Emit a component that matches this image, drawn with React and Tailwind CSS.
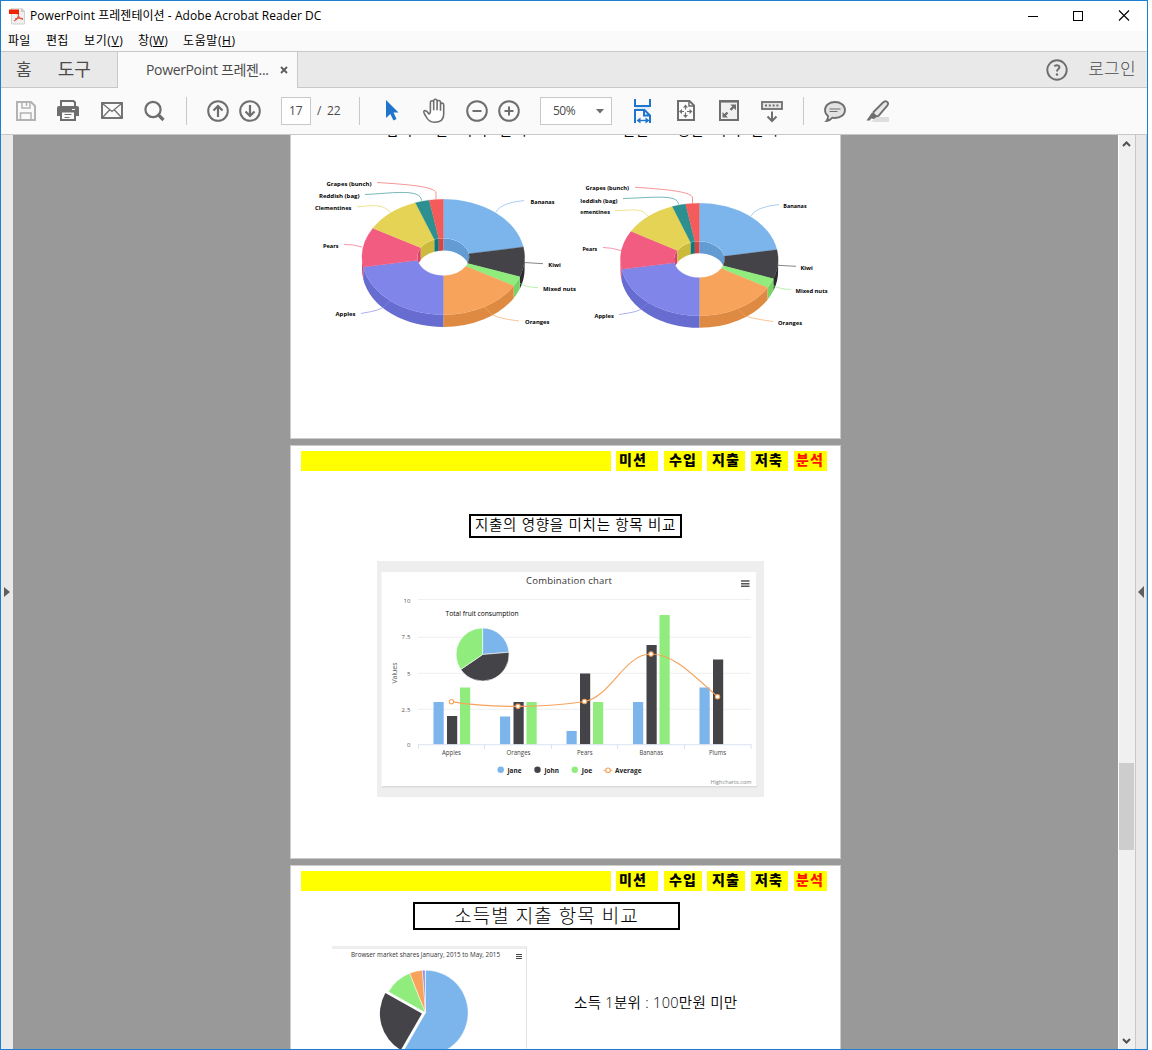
import React from "react";

const G = "#6e6e6e";

function PdfIcon() {
  return (
    <svg className="ml-2 h-[17px] w-[18px]" viewBox="9 7.5 18 17">
      <path d="M11.500 7.500h10l3 3v13h-13z" fill="#f0f0f0" stroke="#d2d2d2" />
      <path d="M21 7.500l4 4h-4z" fill="#c9c9c9" />
      <rect x="9" y="9" width="10" height="4.500" fill="#f02400" />
      <path d="M18.500 13.500c0 3-2 6-4.500 7M18 13.500c.5 3 2.500 5 5 5.500M15 18.500c2-.8 5-1.200 8-.3" fill="none" stroke="#e8543f" strokeWidth="1.200" />
    </svg>
  );
}

function TitleBar() {
  return (
    <div className="flex h-[30px] shrink-0 items-center bg-white">
      <PdfIcon />
      <span className="-mt-px ml-[3px] whitespace-pre text-[12px] tracking-[0.05px] text-black">PowerPoint 프레젠테이션 - Adobe Acrobat Reader DC</span>
      <svg className="mr-[17px] ml-auto h-[12px] w-[102px]" viewBox="1028 9.5 102 12" fill="none" stroke="#000" shapeRendering="crispEdges">
        <path d="M1028 15.500h10" />
        <rect x="1073.500" y="10.500" width="9" height="9" />
        <path d="M1119 10l10 10M1129 10l-10 10" shapeRendering="auto" strokeWidth="1.100" />
      </svg>
    </div>
  );
}

function MenuBar() {
  return (
    <div className="flex h-[20px] shrink-0 items-center bg-[#fafafa] text-[12px] leading-[20px] whitespace-nowrap text-black">
      <span className="ml-[7px] w-[38px] tracking-[0.3px]">파일</span>
      <span className="w-[38px] tracking-[0.3px]">편집</span>
      <span className="w-[54px] tracking-[0.6px]">보기(<u>V</u>)</span>
      <span className="w-[45px] tracking-[0.2px]">창(<u>W</u>)</span>
      <span className="tracking-[0.6px]">도움말(<u>H</u>)</span>
    </div>
  );
}

function TabBar() {
  return (
    <div className="flex h-[37px] shrink-0 border-t border-[#c8c8c8] bg-[#e9e9e9] text-[#4b4b4b]">
      <div className="flex w-[117px] items-center border-r border-b border-[#c8c8c8] text-[17px]">
        <span className="ml-[15px]">홈</span>
        <span className="ml-[26px] text-[18px]">도구</span>
      </div>
      <div className="flex w-[180px] items-center border-r border-[#c8c8c8] bg-[#fafafa]">
        <span className="-mt-[2px] ml-[28px] w-[134px] text-[14px] tracking-[-0.35px] whitespace-nowrap">PowerPoint 프레젠...</span>
        <svg className="h-[8px] w-[8px]" viewBox="0 0 8 8"><path d="M1 1l6 6M7 1l-6 6" stroke="#5c5c5c" strokeWidth="1.800" /></svg>
      </div>
      <div className="flex flex-1 items-center border-b border-[#c8c8c8]">
        <svg className="ml-auto h-[22px] w-[22px]" viewBox="0 0 22 22">
          <circle cx="11" cy="11" r="9.700" fill="none" stroke={G} strokeWidth="1.900" />
          <path d="M8.200 7.200q2.600-1.500 4.500-.4q1.600 1.400-.4 3.200q-1.300 1-1.300 2.500" fill="none" stroke={G} strokeWidth="2" />
          <circle cx="11" cy="15.500" r="1.200" fill={G} />
        </svg>
        <span className="mr-[11px] ml-[20px] -mt-px text-[17px] font-light tracking-[0.3px]">로그인</span>
      </div>
    </div>
  );
}

function Icon({ className, x, w, children }) {
  return (
    <svg className={`h-[28px] shrink-0 ${className}`} viewBox={`${x} 97 ${w} 28`} fill="none" stroke={G} strokeWidth="2">
      {children}
    </svg>
  );
}

function Sep({ className }) {
  return <div className={`h-[28px] w-px shrink-0 bg-[#c8c8c8] ${className}`} />;
}

function Toolbar() {
  return (
    <div className="flex h-[47px] shrink-0 items-center border-b border-[#c8c8c8] bg-[#fafafa] text-[#4b4b4b]">
      <Icon x={16} w={20} className="ml-[15px] w-[20px]">
        <path d="M17 102h14l4 4v14h-18z" stroke="#b3b3b3" />
        <path d="M22 102v6h8v-6" stroke="#b3b3b3" strokeWidth="1.500" />
        <path d="M26.500 103v3" stroke="#b3b3b3" strokeWidth="1.500" />
        <path d="M20.500 120v-7h10.500v7" stroke="#b3b3b3" strokeWidth="1.500" />
      </Icon>
      <Icon x={57} w={22} className="ml-[21px] w-[22px]">
        <path d="M61 106v-5h12.500l1.500 1.500v3.500" />
        <path d="M59 106h18q2 0 2 2v8h-4v-3.500h-14v3.500h-4v-8q0-2 2-2z" fill={G} stroke="none" />
        <path d="M61 112v8h14v-8" />
        <path d="M64.500 114.500h7M64.500 117.500h5" strokeWidth="1.200" />
        <path d="M72 109.500h3" stroke="#fafafa" strokeWidth="1" />
      </Icon>
      <Icon x={101} w={22} className="ml-[22px] w-[22px]">
        <rect x="102" y="103" width="20" height="15" strokeWidth="1.900" />
        <path d="M103 104l9 7.500 9-7.500M103 117l6.500-7M121 117l-6.500-7" strokeWidth="1.200" />
      </Icon>
      <Icon x={144} w={21} className="ml-[21px] w-[21px]">
        <circle cx="153" cy="109.500" r="7.600" strokeWidth="2.200" />
        <path d="M158 114.500l5.500 5.500" strokeWidth="3.200" />
      </Icon>
      <Sep className="ml-[21px]" />
      <Icon x={207} w={22} className="ml-[20px] w-[22px]">
        <circle cx="218" cy="111" r="9.800" />
        <path d="M218 117v-11M213.500 110.500l4.500-4.500 4.500 4.500" strokeWidth="2.200" />
      </Icon>
      <Icon x={239} w={22} className="ml-[10px] w-[22px]">
        <circle cx="250" cy="111" r="9.800" />
        <path d="M250 105v11M245.500 111.500l4.500 4.500 4.500-4.500" strokeWidth="2.200" />
      </Icon>
      <div className="ml-[20px] flex h-[28px] w-[30px] items-center border border-[#c8c8c8] bg-white pl-[7px] text-[12px] tracking-[-0.2px]">17</div>
      <span className="ml-[6px] w-[42px] text-[12px] tracking-[-0.2px] whitespace-pre">/  22</span>
      <Sep />
      <Icon x={385} w={14} className="ml-[25px] w-[14px]">
        <path d="M386 100l12.500 12.500h-5l3 6.500-3 1.500-3.200-6.500-4.300 4z" fill="#1f75cc" stroke="none" />
      </Icon>
      <Icon x={422} w={24} className="ml-[23px] w-[24px]">
        <path d="M428.500 113.500c-1.500-2.500-3.500-3.500-4.500-2.500s.5 3 2 5.500c2 4 4 5.800 8.500 5.800c6 0 9.200-3 9.200-8v-9.500c0-2.300-3.200-2.300-3.200 0v6v-8.500c0-2.400-3.400-2.400-3.400 0v8v-9.300c0-2.400-3.400-2.400-3.400 0v9.300v-7.800c0-2.400-3.300-2.400-3.300 0v9c0 1.600-1.200 3-1.900 2z" strokeWidth="1.600" fill="#fff" />
      </Icon>
      <Icon x={466} w={22} className="ml-[20px] w-[22px]">
        <circle cx="477" cy="111" r="9.800" /><path d="M472.500 111h9" />
      </Icon>
      <Icon x={498} w={22} className="ml-[10px] w-[22px]">
        <circle cx="509" cy="111" r="9.800" /><path d="M504.500 111h9M509 106.500v9" />
      </Icon>
      <div className="ml-[20px] flex h-[28px] w-[72px] items-center border border-[#c8c8c8] bg-white text-[12px]">
        <span className="ml-[12px] w-[43px] tracking-[-0.5px]">50%</span>
        <svg className="h-[5px] w-[8px]" viewBox="0 0 8 5"><path d="M0 0h8l-4 4.500z" fill={G} /></svg>
      </div>
      <Icon x={633} w={19} className="ml-[21px] w-[19px]">
        <path d="M635 107h15v2.500h-15z" fill="#dce9f7" stroke="none" />
        <path d="M635 99v7h15v-7M635 123v-13h9.500l5.500 5.500v7.500M644 110v5.500h6" stroke="#1f75cc" />
        <path d="M638 120.500h10" stroke="#1f75cc" strokeWidth="1.400" />
        <path d="M640.500 117.500l-4 3 4 3zM645.500 117.500l4 3-4 3z" fill="#1f75cc" stroke="none" />
      </Icon>
      <Icon x={676} w={20} className="ml-[24px] w-[20px]">
        <path d="M678 101h11.500l4.500 4.500v14.500h-16z" />
        <path d="M689 101v5h5" strokeWidth="1.500" />
        <path d="M685.500 106v10M680.500 111.500h10.500" strokeWidth="1.200" strokeDasharray="3.500 3" />
        <path d="M683 107.500l2.500-3 2.500 3zM683 115l2.500 3 2.500-3zM682 109l-3 2.500 3 2.500zM689.500 109l3 2.500-3 2.500z" fill={G} stroke="none" />
      </Icon>
      <Icon x={719} w={20} className="ml-[23px] w-[20px]">
        <rect x="720" y="101" width="18" height="19" fill="#f0f0f0" />
        <path d="M720 101.300h18" strokeWidth="2.600" />
        <path d="M730.500 109.800l3-3M724.500 115.500l3-3" strokeWidth="2.400" />
        <path d="M730.300 104.500h5.700v5.700zM722.500 112v5.500h5.500z" fill={G} stroke="none" />
      </Icon>
      <Icon x={761} w={22} className="ml-[22px] w-[22px]">
        <rect x="762" y="102" width="20" height="7" fill="#e6e6e6" strokeWidth="1.800" />
        <path d="M765 105.500h14" strokeDasharray="2 1.800" />
        <path d="M772 111.500v9.500M767.500 116.500l4.500 4.500 4.500-4.500" />
      </Icon>
      <Sep className="ml-[20px]" />
      <Icon x={824} w={22} className="ml-[20px] w-[22px]">
        <path d="M835 102c5.500 0 10 3.200 10 8s-4.500 8-10 8q-1.500 0-2.500-.3-2.500 3-6 3.300 1.800-2 1.500-5c-2-1.500-3-3.500-3-6 0-4.800 4.500-8 10-8z" fill="#e2e2e2" strokeWidth="1.800" />
        <path d="M829.500 109h11M829.500 111.500h8" strokeWidth="1.200" />
      </Icon>
      <Icon x={866} w={24} className="ml-[20px] w-[24px]">
        <path d="M876 117h13v5h-18z" fill="#dedede" stroke="none" />
        <path d="M873.500 112l9.500-9.500q2-2 4-.8t.5 3.700l-9 10.500-2.500.3-2.500-2.200z" fill="#e6e6e6" strokeWidth="1.800" />
        <path d="M872 112.500l5 4-3 2.500-3-.5-1 2h-3.500z" fill={G} stroke="none" />
      </Icon>
    </div>
  );
}

const SLICES = [
  ["#7cb5ec", "#639cd3", 0, 80],
  ["#434348", "#2a2a2f", 80, 110],
  ["#90ed7d", "#77d464", 110, 120],
  ["#f7a35c", "#de8a43", 120, 180],
  ["#8085e9", "#676cd0", 180, 260],
  ["#f15c80", "#d84367", 260, 300],
  ["#e4d354", "#cbba3b", 300, 340],
  ["#2b908f", "#127776", 340, 350],
  ["#f45b5b", "#db4242", 350, 360],
];

function at(cx, cy, rx, ry, deg) {
  const a = (deg * Math.PI) / 180;
  return `${(cx + rx * Math.sin(a)).toFixed(2)} ${(cy - ry * Math.cos(a)).toFixed(2)}`;
}

function band(cx, cy, rx, ry, d, a, b) {
  return `M${at(cx, cy, rx, ry, a)}A${rx} ${ry} 0 0 1 ${at(cx, cy, rx, ry, b)}L${at(cx, cy + d, rx, ry, b)}A${rx} ${ry} 0 0 0 ${at(cx, cy + d, rx, ry, a)}Z`;
}

function ring(cx, cy, rx, ry, ix, iy, a, b) {
  return `M${at(cx, cy, rx, ry, a)}A${rx} ${ry} 0 0 1 ${at(cx, cy, rx, ry, b)}L${at(cx, cy, ix, iy, b)}A${ix} ${iy} 0 0 0 ${at(cx, cy, ix, iy, a)}Z`;
}

function wedge(cx, cy, r, a, b) {
  return `M${cx} ${cy}L${at(cx, cy, r, r, a)}A${r} ${r} 0 ${b - a > 180 ? 1 : 0} 1 ${at(cx, cy, r, r, b)}Z`;
}

function Donut({ id, cx, cy, rx, ry, ix, iy, d, labels, lines }) {
  return (
    <g>
      <clipPath id={id}><ellipse cx={cx} cy={cy} rx={ix} ry={iy} /></clipPath>
      {SLICES.filter((s) => s[3] > 90 && s[2] < 270).map(([, dark, a, b]) => (
        <path key={a} d={band(cx, cy, rx, ry, d, Math.max(a, 90), Math.min(b, 270))} fill={dark} />
      ))}
      <g clipPath={`url(#${id})`}>
        {SLICES.filter((s) => s[3] > 270 || s[2] < 90).map(([, dark, a, b]) => (
          <path key={a} d={band(cx, cy, ix, iy, d, a >= 260 ? Math.max(a, 270) : a, a < 90 ? Math.min(b, 90) : b)} fill={dark} />
        ))}
      </g>
      {SLICES.map(([c, , a, b]) => (
        <path key={a} d={ring(cx, cy, rx, ry, ix, iy, a, b)} fill={c} stroke={c} strokeWidth="0.300" />
      ))}
      {lines.map(([c, path]) => <path key={path} d={path} fill="none" stroke={c} strokeWidth="0.650" />)}
      {labels.map(([t, x, y, w]) => (
        <text key={t} x={x} y={y} textLength={w} lengthAdjust="spacingAndGlyphs" fontSize="6" fontWeight="700" fill="#000">{t}</text>
      ))}
    </g>
  );
}

function DonutCharts() {
  return (
    <svg className="ml-[19px] block h-[160px] w-[525px]" viewBox="310 175 525 160">
      <Donut id="holeLeft" cx={443.3} cy={257} rx={81.3} ry={57.7} ix={26} iy={18.7} d={12.300}
        labels={[
          ["Grapes (bunch)", 326.5, 185.700, 45], ["Reddish (bag)", 319, 198, 40.5], ["Clementines", 315, 210.300, 36.500],
          ["Pears", 323, 247.700, 15.500], ["Apples", 335.500, 316.300, 20], ["Bananas", 530.5, 204.300, 24],
          ["Kiwi", 548.300, 266.700, 12.500], ["Mixed nuts", 543, 291.300, 33], ["Oranges", 525, 324, 24.500],
        ]}
        lines={[
          ["#f45b5b", "M377 182.500C400 184 436 186 436 193V199"],
          ["#2b908f", "M365 194.500C390 193.500 421 188 421.500 200.500"],
          ["#e4d354", "M357 207C375 205 382 204 391 212.500"],
          ["#f15c80", "M344 244.500Q352 244 362 247"],
          ["#8085e9", "M361 313.500Q382 310 384 306.500Q388 302 391 301"],
          ["#7cb5ec", "M524 200.500Q500 203 496 212"],
          ["#434348", "M524.500 262.500L543 263.700"],
          ["#90ed7d", "M519.500 283Q524 287 538 287.700"],
          ["#f7a35c", "M519 321Q493 318 489 312Q487 308 484 307.500"],
        ]} />
      <clipPath id="rightHalf"><rect x="580.500" y="175" width="260" height="160" /></clipPath>
      <g clipPath="url(#rightHalf)">
        <Donut id="holeRight" cx={699.3} cy={259.500} rx={78.800} ry={56.300} ix={25.300} iy={18.200} d={12}
          labels={[
            ["Grapes (bunch)", 585.500, 190.300, 43.500], ["Reddish (bag)", 578.500, 202.500, 39], ["Clementines", 574.500, 214.300, 35.500],
            ["Pears", 582.500, 251.300, 14.700], ["Apples", 594.500, 317.700, 19.300], ["Bananas", 783.300, 208.300, 23.300],
            ["Kiwi", 800.500, 269.500, 12.300], ["Mixed nuts", 795.500, 293.300, 32], ["Oranges", 778, 325, 24],
          ]}
          lines={[
            ["#f45b5b", "M635 187.300C660 189 692.500 191 692.500 198V203.500"],
            ["#2b908f", "M623 198.500C655 197.500 678 194 678.500 204.500"],
            ["#e4d354", "M615 210.700C636 210 641 208 648 216"],
            ["#f15c80", "M603 247.500Q611 247.500 621 250.500"],
            ["#8085e9", "M619 314.500Q638 312 641 309Q645 304 649 303"],
            ["#7cb5ec", "M779 204.500Q755 207 751 216"],
            ["#434348", "M778 265.300L796 266.300"],
            ["#90ed7d", "M773 285.500Q779 289 791 289.500"],
            ["#f7a35c", "M773 321.500Q747 318 743 314.500Q741 311 738 309.500"],
          ]} />
      </g>
    </svg>
  );
}

const BARS = [
  [433.500, 702, "#7cb5ec"], [447, 716, "#434348"], [460, 687.500, "#90ed7d"],
  [500, 716.500, "#7cb5ec"], [513.500, 702, "#434348"], [526.500, 702, "#90ed7d"],
  [566.500, 731, "#7cb5ec"], [580, 673.500, "#434348"], [593, 702, "#90ed7d"],
  [633, 702, "#7cb5ec"], [646.500, 645, "#434348"], [659.500, 615, "#90ed7d"],
  [699.500, 687.500, "#7cb5ec"], [713, 659.500, "#434348"],
];
const POINTS = [[451.500, 701.700], [518, 706.300], [584.500, 701.500], [651, 654], [717.500, 696.700]];

function CombinationChart() {
  return (
    <svg className="mt-[23px] ml-[86px] block h-[236px] w-[387px]" viewBox="377 561 387 236">
      <rect x="377" y="561" width="387" height="236" fill="#eee" />
      <rect x="382" y="573" width="375" height="214.500" fill="#dcdcdc" />
      <rect x="381.500" y="572" width="375" height="214" fill="#fff" />
      <text x="526" y="584" textLength="86" fontSize="9.500" fill="#333">Combination chart</text>
      <path d="M741 581h8.500M741 583.700h8.500M741 586.200h8.500" stroke="#555" strokeWidth="1.500" />
      {[599.500, 637.300, 673.300, 709.300].map((y) => <path key={y} d={`M418 ${y}H751`} stroke="#efefef" />)}
      {[["10", 602.500, 403.500, 7], ["7.5", 639.300, 401.500, 9], ["5", 675.700, 407, 3.500], ["2.5", 711.500, 401.500, 9], ["0", 747, 407, 3.500]].map(([t, y, x, w]) => (
        <text key={t} x={x} y={y} textLength={w} fontSize="6" fill="#555">{t}</text>
      ))}
      <text transform="translate(397 683.500) rotate(-90)" textLength="21" fontSize="7" fill="#555">Values</text>
      {BARS.map(([x, y, c]) => <rect key={x} x={x} y={y} width="10.200" height={744.500 - y} fill={c} />)}
      <path d="M418 744.700H751.500M418.500 744v5M484.500 744v5M551.500 744v5M617.500 744v5M684.500 744v5M751 744v5" stroke="#dde3f3" fill="none" />
      {[["Apples", 442, 19], ["Oranges", 506.500, 24], ["Pears", 577, 15.500], ["Bananas", 639.500, 23.500], ["Plums", 709, 17]].map(([t, x, w]) => (
        <text key={t} x={x} y="755" textLength={w} lengthAdjust="spacingAndGlyphs" fontSize="6.200" fill="#444">{t}</text>
      ))}
      <path d="M451.500 701.700C464 704 491 706.500 518 706.300S566 704.500 584.500 701.500C611 697 624 654 651 654C672 654 689 671 717.500 696.700" fill="none" stroke="#f7a35c" strokeWidth="1.200" />
      {POINTS.map(([x, y]) => <circle key={x} cx={x} cy={y} r="2.200" fill="#fff" stroke="#f7a35c" strokeWidth="1.100" />)}
      <text x="445.500" y="616" textLength="73" lengthAdjust="spacingAndGlyphs" fontSize="6.200" fill="#000">Total fruit consumption</text>
      {[["#7cb5ec", 0, 85.100], ["#434348", 85.100, 235.600], ["#90ed7d", 235.600, 360]].map(([c, a, b]) => (
        <path key={c} d={wedge(482.600, 654.500, 26.500, a, b)} fill={c} stroke="#fff" strokeWidth="0.600" />
      ))}
      <circle cx="500.700" cy="769.800" r="3.200" fill="#7cb5ec" />
      <circle cx="537.500" cy="769.800" r="3.200" fill="#434348" />
      <circle cx="574.800" cy="769.800" r="3.200" fill="#90ed7d" />
      <path d="M603.500 770.300h9" stroke="#f7a35c" />
      <circle cx="608" cy="770.300" r="2.300" fill="#fff" stroke="#f7a35c" strokeWidth="1.200" />
      {[["Jane", 507.500, 14], ["John", 544.500, 14.500], ["Joe", 581.700, 10.500], ["Average", 615, 26.500]].map(([t, x, w]) => (
        <text key={t} x={x} y="772.500" textLength={w} lengthAdjust="spacingAndGlyphs" fontSize="6.300" fontWeight="700" fill="#222">{t}</text>
      ))}
      <text x="710.500" y="784" textLength="41" lengthAdjust="spacingAndGlyphs" fontSize="5.500" fill="#888">Highcharts.com</text>
    </svg>
  );
}

function MarketChart() {
  return (
    <svg className="block h-[120px] w-[195px] shrink-0" viewBox="332 946 195 120">
      <rect x="332" y="946" width="195" height="3" fill="#eee" />
      <rect x="526" y="946" width="1" height="120" fill="#e3e3e3" />
      <text x="351" y="957.300" textLength="149" fontSize="6.300" fill="#333">Browser market shares January, 2015 to May, 2015</text>
      <path d="M516 954.500h6M516 956.500h6M516 958.500h6" stroke="#444" strokeWidth="1.100" />
      {[["#7cb5ec", 0, 210], ["#90ed7d", 299.500, 338.200], ["#f7a35c", 338.200, 356], ["#8085e9", 356, 359.300]].map(([c, a, b]) => (
        <path key={c} d={wedge(425.500, 1012.800, 42.600, a, b)} fill={c} stroke="#fff" strokeWidth="0.500" />
      ))}
      <path d={wedge(421.900, 1013.600, 42, 210, 299.500)} fill="#434348" />
    </svg>
  );
}

function SlideNav() {
  return (
    <div className="mt-[5px] ml-[10px] flex h-[20px] text-[14px] leading-[18px] font-black tracking-[1.2px] whitespace-nowrap text-black">
      <div className="w-[310px] bg-[#ff0]" />
      <div className="ml-[5px] w-[42px] bg-[#ff0] pl-[3px]">미션</div>
      <div className="ml-[6px] w-[38px] bg-[#ff0] pl-[5px]">수입</div>
      <div className="ml-[5px] w-[38px] bg-[#ff0] pl-[5px]">지출</div>
      <div className="ml-[6px] w-[37px] bg-[#ff0] pl-[4px]">저축</div>
      <div className="ml-[6px] w-[33px] bg-[#ff0] pl-[2px] text-[#ff1200]">분석</div>
    </div>
  );
}

function Document() {
  return (
    <div className="flex flex-1 flex-col gap-[6px] overflow-hidden bg-[#999] pl-[277px]">
      <div className="h-[304px] w-[551px] shrink-0 border-x border-b border-[#ccc] bg-white">
        <div className="flex h-[40px] items-start overflow-hidden text-[14px] leading-[14px] tracking-[1.2px] text-black">
          <div className="-mt-[12px] ml-[95px] w-[236px] [word-spacing:6.5px] whitespace-nowrap">남자 1인 가치 분석</div>
          <div className="-mt-[12px] [word-spacing:4px] whitespace-nowrap">신혼 1 영은 가치 분석</div>
        </div>
        <DonutCharts />
      </div>
      <div className="flex h-[414px] w-[551px] shrink-0 flex-col border border-[#ccc] bg-white">
        <SlideNav />
        <div className="mt-[43px] ml-[178px] flex h-[24px] w-[213px] items-center justify-center border-2 border-black pb-[2px] text-[14.500px] font-[350] tracking-[0.75px] whitespace-nowrap text-black">지출의 영향을 미치는 항목 비교</div>
        <CombinationChart />
      </div>
      <div className="flex h-[414px] w-[551px] shrink-0 flex-col border border-[#ccc] bg-white">
        <SlideNav />
        <div className="mt-[11px] ml-[122px] flex h-[28px] w-[267px] items-center justify-center border-2 border-black text-[19px] font-light tracking-[1.050px] whitespace-nowrap text-black">소득별 지출 항목 비교</div>
        <div className="mt-[16px] ml-[41px] flex">
          <MarketChart />
          <div className="mt-[47px] ml-[47px] text-[14.500px] leading-[20px] font-[350] tracking-[0.300px] whitespace-nowrap text-black">소득 1분위 : 100만원 미만</div>
        </div>
      </div>
    </div>
  );
}

function ScrollBar() {
  return (
    <div className="flex w-[17px] shrink-0 flex-col border-l border-white bg-[#f0f0f0]">
      <svg className="mt-[5px] ml-[3px] h-[8px] w-[9px] shrink-0" viewBox="0 0 9 8"><path d="M1 6l3.500-3.500L8 6" fill="none" stroke="#505050" strokeWidth="2" /></svg>
      <div className="mt-[615px] h-[87px] w-[15px] shrink-0 bg-[#cdcdcd]" />
      <svg className="mt-auto mb-[4px] ml-[3px] h-[8px] w-[9px] shrink-0" viewBox="0 0 9 8"><path d="M1 2l3.500 3.500L8 2" fill="none" stroke="#505050" strokeWidth="2" /></svg>
    </div>
  );
}

export default function App() {
  return (
    <div className="h-[1050px] w-[1152px] overflow-hidden bg-white font-['Open_Sans','Noto_Sans_CJK_KR',sans-serif]">
      <div className="flex h-[1050px] w-[1148px] flex-col border border-[#1b7fd4]">
        <TitleBar />
        <MenuBar />
        <TabBar />
        <Toolbar />
        <div className="flex min-h-0 flex-1">
          <div className="flex w-[12px] shrink-0 items-center bg-[#e9e9e9]">
            <svg className="ml-[3px] h-[10px] w-[6px]" viewBox="0 0 6 10"><path d="M0 0l6 5-6 5z" fill="#5f5f5f" /></svg>
          </div>
          <Document />
          <ScrollBar />
          <div className="flex w-[12px] shrink-0 items-center border-x border-[#c8c8c8] bg-[#e9e9e9]">
            <svg className="ml-[2px] h-[12px] w-[6px]" viewBox="0 0 6 12"><path d="M6 0v12l-6-6z" fill="#5f5f5f" /></svg>
          </div>
        </div>
      </div>
    </div>
  );
}
